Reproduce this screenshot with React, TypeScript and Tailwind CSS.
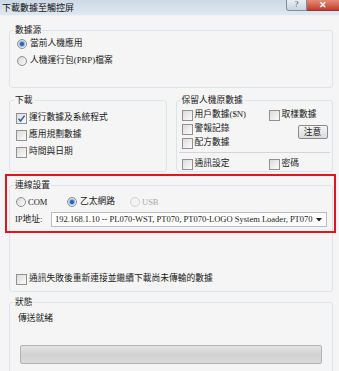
import type { ReactNode } from "react"

const Radio = ({ checked = false, disabled = false }: { checked?: boolean; disabled?: boolean }) => (
  <span
    className={`flex h-[10px] w-[10px] shrink-0 items-center justify-center rounded-full border ${
      disabled ? "border-[#d2d2d2] bg-[#f3f3f3]" : "border-[#8d8f91] bg-linear-to-br from-[#d6d6d6] to-[#fdfdfd]"
    }`}
  >
    {checked && <span className="h-[4px] w-[4px] rounded-full bg-[#2063b8] shadow-[0_0_1px_1px_#7fb0e6]" />}
  </span>
)

const Check = ({ checked = false }: { checked?: boolean }) => (
  <span className="flex h-[11px] w-[11px] shrink-0 items-center justify-center border border-[#8f9193] bg-linear-to-br from-[#dcdcdc] to-[#fbfbfb]">
    {checked && (
      <svg width="9" height="9" viewBox="0 0 9 9">
        <path d="M1.5 4.8 L3.6 7 L7.6 1.6" fill="none" stroke="#2a5ca8" strokeWidth="1.5" />
      </svg>
    )}
  </span>
)

const Row = ({ children, className = "" }: { children: ReactNode; className?: string }) => (
  <div className={`flex h-[14px] items-center gap-[2px] whitespace-nowrap ${className}`}>{children}</div>
)

const Group = ({ title, className = "", children }: { title: string; className?: string; children?: ReactNode }) => (
  <fieldset className={`rounded-[3px] border border-[#dde4e9] ${className}`}>
    <legend className="ml-[4px] px-[1px] leading-[12px]">{title}</legend>
    {children}
  </fieldset>
)

const App = () => {
  return (
    <div className="relative h-[371px] w-[339px] overflow-hidden bg-[#f5f5f5] font-['Liberation_Serif','Noto_Sans_CJK_TC',serif] text-[8.75px] text-[#1b1b1b]">
      {/* title bar */}
      <div className="flex h-[16px] items-start justify-between border-b border-[#eef2f6] bg-linear-to-b from-[#cdd9e6] to-[#dfe8f1]">
        <span className="pl-[2px] pt-[2px] text-[9px] leading-[12px] text-[#111]">下載數據至觸控屏</span>
        <div className="flex">
          <div className="flex h-[11px] w-[21px] items-center justify-center rounded-bl-[3px] border border-t-0 border-[#7f8d9e] bg-linear-to-b from-[#e9eef3] to-[#c9d3de] text-[8px] leading-none text-[#3b4a5c]">
            ?
          </div>
          <div className="flex h-[11px] w-[32px] items-center justify-center border-b border-[#8c3a2f] bg-linear-to-b from-[#e48a78] to-[#c4392a] text-[9px] font-bold leading-none text-white">
            ✕
          </div>
        </div>
      </div>

      <div className="flex flex-col pl-[9px] pr-[6px] pt-[8px]">
        <Group title="數據源" className="h-[64px]">
          <div className="flex flex-col gap-[3px] pl-[7px] pt-[1px]">
            <Row className="gap-[3px]">
              <Radio checked />
              <span>當前人機應用</span>
            </Row>
            <Row className="gap-[3px]">
              <Radio />
              <span>人機運行包(PRP)檔案</span>
            </Row>
          </div>
        </Group>

        <div className="mt-[6px] grid grid-cols-2 gap-[9px]">
          <Group title="下載" className="h-[78px]">
            <div className="flex flex-col gap-[3px] pl-[6px] pt-[5px]">
              <Row>
                <Check checked />
                <span>運行數據及系統程式</span>
              </Row>
              <Row>
                <Check />
                <span>應用規劃數據</span>
              </Row>
              <Row>
                <Check />
                <span>時間與日期</span>
              </Row>
            </div>
          </Group>
          <Group title="保留人機原數據" className="h-[78px]">
            <div className="flex pl-[5px] pt-[2px]">
              <div className="flex w-[87px] flex-col">
                <Row>
                  <Check />
                  <span>用戶數據($N)</span>
                </Row>
                <Row>
                  <Check />
                  <span>警報記錄</span>
                </Row>
                <Row>
                  <Check />
                  <span>配方數據</span>
                </Row>
              </div>
              <div className="flex flex-col">
                <Row>
                  <Check />
                  <span>取樣數據</span>
                </Row>
                <div className="ml-[29px] mt-[3px] flex h-[14px] w-[30px] items-center justify-center rounded-[2px] border border-[#8a8a8a] bg-linear-to-b from-[#f4f4f4] to-[#dcdcdc] leading-none">
                  注意
                </div>
              </div>
            </div>
            <div className="mx-[2px] mt-[2px] h-px bg-[#d2d6da]" />
            <div className="flex pl-[5px] pt-[4px]">
              <Row className="w-[87px]">
                <Check />
                <span>通訊設定</span>
              </Row>
              <Row>
                <Check />
                <span>密碼</span>
              </Row>
            </div>
          </Group>
        </div>

        <Group title="連線設置" className="mt-[7px] h-[113px]">
          <div className="flex flex-col pl-[6px] pr-[5px] pt-[4px]">
            <div className="flex h-[14px] items-center">
              <div className="flex w-[51px] items-center gap-[2px]">
                <Radio />
                <span className="text-[8.5px]">COM</span>
              </div>
              <div className="flex w-[63px] items-center gap-[3px]">
                <Radio checked />
                <span>乙太網路</span>
              </div>
              <div className="flex items-center gap-[2px] text-[#a8a8a8]">
                <Radio disabled />
                <span className="text-[8.5px]">USB</span>
              </div>
            </div>
            <div className="mt-[3px] flex h-[15px] items-center">
              <span className="-ml-[1px] w-[36px] shrink-0 whitespace-nowrap">
                <span className="text-[8.5px]">IP</span>地址:
              </span>
              <div className="flex h-[15px] min-w-0 flex-1 items-center justify-between overflow-hidden border border-[#b9bcc0] bg-white pl-[3px] pr-[4px]">
                <span className="overflow-hidden whitespace-nowrap text-[8.5px] leading-none">
                  192.168.1.10 -- PL070-WST, PT070, PT070-LOGO System Loader, PT070
                </span>
                <svg width="6" height="4" viewBox="0 0 6 4" className="shrink-0">
                  <path d="M0 0 H6 L3 3.5 Z" fill="#222" />
                </svg>
              </div>
            </div>
            <Row className="mt-[45px]">
              <Check />
              <span>通訊失敗後重新連接並繼續下載尚未傳輸的數據</span>
            </Row>
          </div>
        </Group>

        <Group title="狀態" className="mt-[4px] h-[90px]">
          <div className="pl-[8px] pt-[4px] leading-[12px]">傳送就緒</div>
          <div className="ml-[10px] mr-[10px] mt-[21px] h-[19px] rounded-[2px] border border-[#b4b4b4] bg-linear-to-b from-[#e4e4e4] via-[#d2d2d2] to-[#d9d9d9]" />
        </Group>
      </div>

      {/* highlight box */}
      <div className="absolute left-[5px] top-[174px] h-[59px] w-[331px] border-2 border-[#e3141d]" />
    </div>
  )
}

export default App
